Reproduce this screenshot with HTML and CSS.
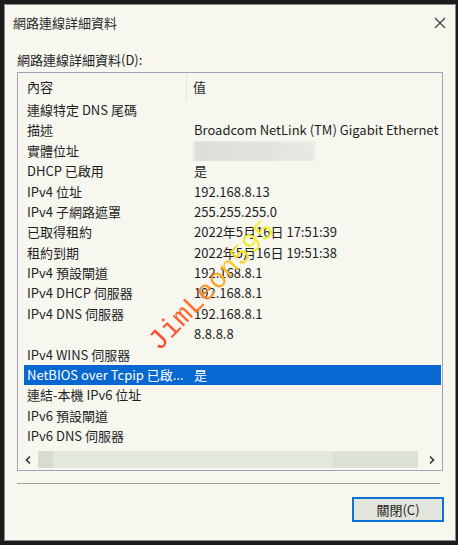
FILE: index.html
```html
<!DOCTYPE html>
<html lang="zh-Hant">
<head>
    <meta charset="UTF-8">
    <meta name="viewport" content="width=device-width, initial-scale=1.0">
    <title>網路連線詳細資料</title>
    <link rel="stylesheet" href="styles.css">
</head>
<body>
    <div class="window">
        <div class="titlebar">
            <span class="title">網路連線詳細資料</span>
            <svg class="close" width="12" height="12" viewBox="0 0 12 12">
                <path d="M1 1 L11 11 M11 1 L1 11" stroke="#3a3a3a" stroke-width="1.1" fill="none"/>
            </svg>
        </div>
        <div class="content">
            <div class="label">網路連線詳細資料(D):</div>
            <div class="listbox">
                <div class="header">
                    <div class="col-name">內容</div>
                    <div class="col-value">值</div>
                </div>
                <div class="rows">
                    <div class="row"><div class="cell-name">連線特定 DNS 尾碼</div><div class="cell-value"></div></div>
                    <div class="row"><div class="cell-name">描述</div><div class="cell-value">Broadcom NetLink (TM) Gigabit Ethernet</div></div>
                    <div class="row"><div class="cell-name">實體位址</div><div class="cell-value"><span class="blurred"></span></div></div>
                    <div class="row"><div class="cell-name">DHCP 已啟用</div><div class="cell-value">是</div></div>
                    <div class="row"><div class="cell-name">IPv4 位址</div><div class="cell-value">192.168.8.13</div></div>
                    <div class="row"><div class="cell-name">IPv4 子網路遮罩</div><div class="cell-value">255.255.255.0</div></div>
                    <div class="row"><div class="cell-name">已取得租約</div><div class="cell-value">2022年5月16日 17:51:39</div></div>
                    <div class="row"><div class="cell-name">租約到期</div><div class="cell-value">2022年5月16日 19:51:38</div></div>
                    <div class="row"><div class="cell-name">IPv4 預設閘道</div><div class="cell-value">192.168.8.1</div></div>
                    <div class="row"><div class="cell-name">IPv4 DHCP 伺服器</div><div class="cell-value">192.168.8.1</div></div>
                    <div class="row"><div class="cell-name">IPv4 DNS 伺服器</div><div class="cell-value">192.168.8.1</div></div>
                    <div class="row"><div class="cell-name"></div><div class="cell-value">8.8.8.8</div></div>
                    <div class="row"><div class="cell-name">IPv4 WINS 伺服器</div><div class="cell-value"></div></div>
                    <div class="row selected"><div class="cell-name">NetBIOS over Tcpip 已啟...</div><div class="cell-value">是</div></div>
                    <div class="row"><div class="cell-name">連結-本機 IPv6 位址</div><div class="cell-value"></div></div>
                    <div class="row"><div class="cell-name">IPv6 預設閘道</div><div class="cell-value"></div></div>
                    <div class="row"><div class="cell-name">IPv6 DNS 伺服器</div><div class="cell-value"></div></div>
                </div>
                <div class="hscroll">
                    <div class="arrow">
                        <svg width="8" height="10" viewBox="0 0 8 10"><path d="M6 1.5 L2.5 5 L6 8.5" stroke="#333" stroke-width="1.6" fill="none"/></svg>
                    </div>
                    <div class="track"><div class="thumb"></div></div>
                    <div class="arrow">
                        <svg width="8" height="10" viewBox="0 0 8 10"><path d="M2 1.5 L5.5 5 L2 8.5" stroke="#333" stroke-width="1.6" fill="none"/></svg>
                    </div>
                </div>
                <div class="watermark">JimLeon595</div>
            </div>
            <div class="separator"></div>
            <div class="actions">
                <button class="btn-close">關閉(C)</button>
            </div>
        </div>
    </div>
</body>
</html>
```

FILE: styles.css
```css
html, body {
    margin: 0;
    padding: 0;
}

body {
    width: 458px;
    height: 545px;
    background: #1b1b1b;
    font-family: 'Noto Sans CJK TC', 'Noto Sans', sans-serif;
    font-size: 13px;
    color: #1e1e1e;
    overflow: hidden;
}

.window {
    box-sizing: border-box;
    width: 452px;
    height: 537px;
    margin: 4px 2px 4px 4px;
    background: #f7f7f0;
    border: 1px solid #8c8c8c;
    display: flex;
    flex-direction: column;
}

.titlebar {
    height: 35px;
    display: flex;
    align-items: center;
    justify-content: space-between;
    padding: 0 9px 0 8px;
}

.title {
    font-size: 13px;
    color: #2a2a2a;
}

.close {
    display: block;
    margin-top: 1px;
}

.content {
    padding: 0 12px;
    display: flex;
    flex-direction: column;
}

.label {
    height: 20px;
    line-height: 20px;
    margin-top: 10px;
}

.listbox {
    position: relative;
    box-sizing: border-box;
    height: 399px;
    margin-top: 2px;
    border: 1px solid #a3a2b6;
    display: flex;
    flex-direction: column;
    overflow: hidden;
}

.header {
    height: 27px;
    display: grid;
    grid-template-columns: 163px 1fr;
    margin-left: 6px;
    flex-shrink: 0;
}

.col-name {
    padding-left: 3px;
    line-height: 26px;
    border-right: 1px solid #e2e2dc;
    margin-top: 1px;
}

.col-value {
    padding-left: 6px;
    line-height: 26px;
    margin-top: 1px;
}

.rows {
    flex: 1;
    overflow: hidden;
}

.row {
    height: 20.375px;
    line-height: 20.375px;
    display: grid;
    grid-template-columns: 163px 1fr;
    margin: 0 1px 0 6px;
    white-space: nowrap;
}

.cell-name {
    padding-left: 3px;
    overflow: hidden;
}

.cell-value {
    padding-left: 7px;
    overflow: hidden;
}

.row.selected {
    background: #0868d2;
    color: #fff;
}

.blurred {
    display: inline-block;
    width: 121px;
    height: 21px;
    vertical-align: middle;
    background: linear-gradient(90deg, #dcdcd8, #e2e2de 60%, #e9e9e4);
    filter: blur(1.5px);
    margin-top: -1px;
}

.hscroll {
    height: 17px;
    margin-bottom: 2px;
    display: flex;
    flex-shrink: 0;
}

.arrow {
    width: 20px;
    display: flex;
    align-items: center;
    justify-content: center;
}

.arrow:last-child {
    width: 24px;
    padding-left: 4px;
    box-sizing: border-box;
}

.track {
    flex: 1;
    background: linear-gradient(90deg, #d6dcd0 0, #d6dcd0 15px, #e3e8de 15px, #e3e8de 295px, #dce1d5 295px);
}

.watermark {
    position: absolute;
    left: 194px;
    top: 213px;
    transform: translate(-50%, -50%) rotate(-46deg);
    font-family: 'Liberation Mono', monospace;
    font-size: 28px;
    background: linear-gradient(90deg, #ff3a2a 0%, #ff6a2a 30%, #ffa520 55%, #f2e82a 80%, #f6f232 100%);
    -webkit-background-clip: text;
    background-clip: text;
    color: transparent;
    white-space: nowrap;
}

.separator {
    height: 1px;
    margin: 12px 3px 0 0;
    background: #a0a0a0;
}

.actions {
    display: flex;
    justify-content: flex-end;
    margin-top: 13px;
    margin-right: -1px;
}

.btn-close {
    width: 92px;
    height: 25px;
    box-sizing: border-box;
    border: 2px solid #0a74d6;
    background: #e2e5dc;
    font-family: 'Noto Sans CJK TC', 'Noto Sans', sans-serif;
    font-size: 13px;
    color: #1e1e1e;
    padding: 0;
}
```
